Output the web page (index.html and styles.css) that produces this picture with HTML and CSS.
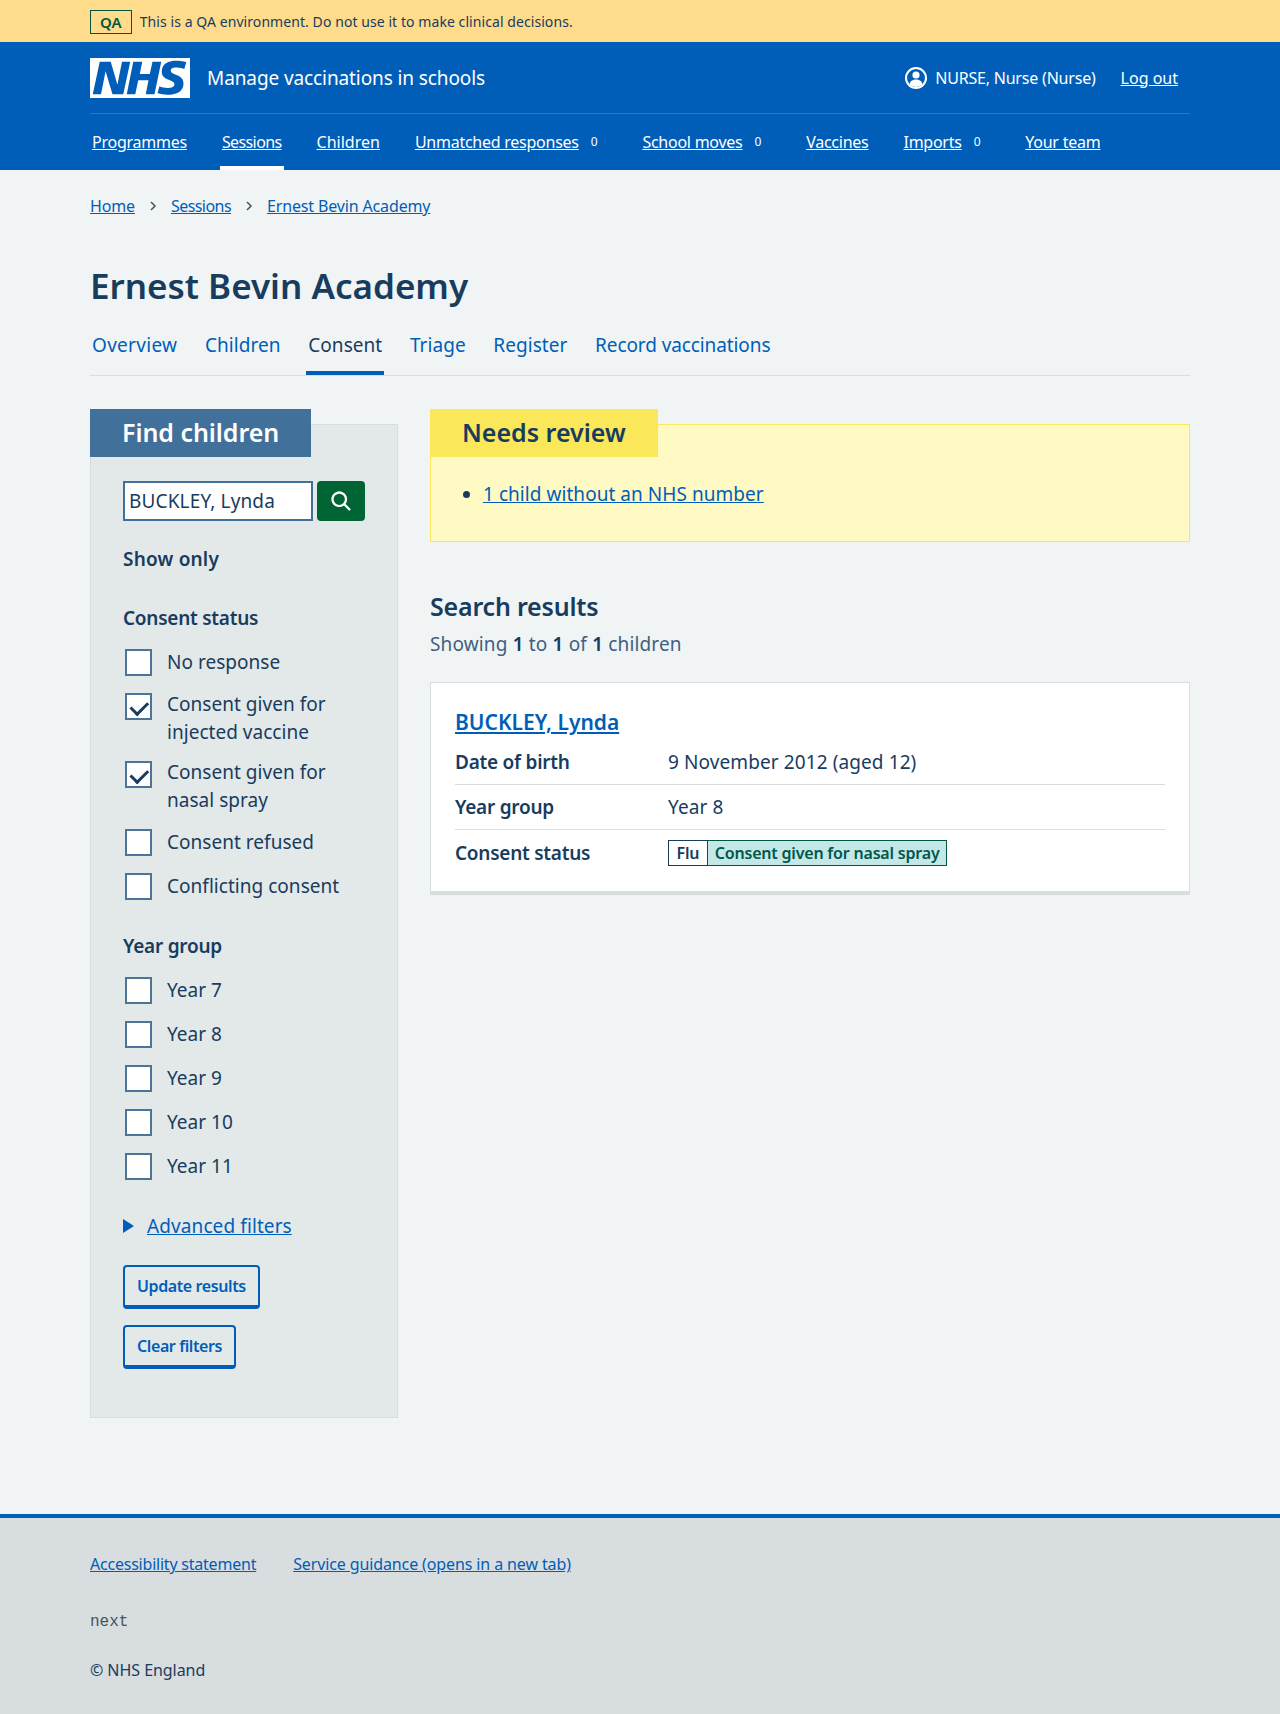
FILE: index.html
```html
<!DOCTYPE html>
<html lang="en">
<head>
<meta charset="utf-8">
<title>Ernest Bevin Academy</title>
<link rel="stylesheet" href="styles.css">
</head>
<body>
<div class="env-banner">
  <div class="wrap env-inner"><strong class="env-tag">QA</strong><span>This is a QA environment. Do not use it to make clinical decisions.</span></div>
</div>
<header class="header">
  <div class="wrap">
    <div class="header-top">
      <svg class="logo" viewBox="0 0 40 16" aria-label="NHS"><path fill="#fff" d="M0 0h40v16H0z"/><path fill="#005eb8" d="M3.9 1.5h4.4l2.6 9h.1l1.8-9h3.3l-2.8 13H9l-2.7-9h-.1l-1.8 9H1.1M17.3 1.5h3.6l-1 4.9h4L25 1.5h3.5l-2.7 13h-3.5l1.1-5.6h-4.1l-1.2 5.6h-3.4M37.7 4.4c-.7-.3-1.6-.6-2.9-.6-1.4 0-2.5.2-2.5 1.3 0 1.8 5.1 1.2 5.1 5.1 0 3.6-3.3 4.5-6.4 4.5-1.3 0-2.9-.3-4-.7l.8-2.7c.7.4 2.1.7 3.2.7s2.8-.2 2.8-1.5c0-2.1-5.1-1.3-5.1-5 0-3.4 2.9-4.4 5.8-4.4 1.6 0 3.1.2 4 .6"/></svg>
      <span class="service">Manage vaccinations in schools</span>
      <div class="account">
        <svg class="user-icon" viewBox="0 0 24 24"><circle cx="12" cy="12" r="10" fill="none" stroke="#fff" stroke-width="2"/><circle cx="12" cy="9" r="3.6" fill="#fff"/><path fill="#fff" d="M5.6 18.6c.5-3.6 3-5 6.4-5s5.900 1.400 6.400 5a9.500 9.500 0 0 1-12.800 0z"/></svg>
        <span>NURSE, Nurse (Nurse)</span>
        <a href="#" class="logout">Log out</a>
      </div>
    </div>
    <nav class="nav">
      <a href="#">Programmes</a>
      <a href="#" class="current">Sessions</a>
      <a href="#" class="loose">Children</a>
      <a href="#">Unmatched responses</a><span class="count">0</span>
      <a href="#">School moves</a><span class="count">0</span>
      <a href="#">Vaccines</a>
      <a href="#">Imports</a><span class="count">0</span>
      <a href="#">Your team</a>
    </nav>
  </div>
</header>
<main class="wrap">
  <ol class="crumbs">
    <li><a href="#">Home</a></li>
    <li class="sep"><svg viewBox="0 0 8 12"><path d="M2 2l4 4-4 4" fill="none" stroke="#425563" stroke-width="1.500"/></svg></li>
    <li class="tight"><a href="#">Sessions</a></li>
    <li class="sep"><svg viewBox="0 0 8 12"><path d="M2 2l4 4-4 4" fill="none" stroke="#425563" stroke-width="1.500"/></svg></li>
    <li><a href="#">Ernest Bevin Academy</a></li>
  </ol>
  <h1 class="title">Ernest Bevin Academy</h1>
  <nav class="tabs">
    <a href="#" class="wide">Overview</a>
    <a href="#">Children</a>
    <a href="#" class="current">Consent</a>
    <a href="#">Triage</a>
    <a href="#">Register</a>
    <a href="#" class="narrow">Record vaccinations</a>
  </nav>
  <div class="columns">
    <aside class="panel filter">
      <h2 class="panel-head blue">Find children</h2>
      <div class="search">
        <input class="search-input" type="text" value="BUCKLEY, Lynda">
        <button class="search-btn" type="button"><svg viewBox="0 0 24 24"><path fill="#fff" d="M19.710 18.290l-4.110-4.100a7 7 0 1 0-1.410 1.410l4.100 4.110a1 1 0 0 0 1.420 0 1 1 0 0 0 0-1.420zM5 10a5 5 0 1 1 5 5 5 5 0 0 1-5-5z"/></svg></button>
      </div>
      <p class="show-only">Show only</p>
      <h3 class="group-title">Consent status</h3>
      <label class="check"><input type="checkbox"><span>No response</span></label>
      <label class="check tall"><input type="checkbox" checked><span>Consent given for injected vaccine</span></label>
      <label class="check tall"><input type="checkbox" checked><span>Consent given for nasal spray</span></label>
      <label class="check"><input type="checkbox"><span>Consent refused</span></label>
      <label class="check"><input type="checkbox"><span>Conflicting consent</span></label>
      <h3 class="group-title second">Year group</h3>
      <label class="check"><input type="checkbox"><span>Year 7</span></label>
      <label class="check"><input type="checkbox"><span>Year 8</span></label>
      <label class="check"><input type="checkbox"><span>Year 9</span></label>
      <label class="check"><input type="checkbox"><span>Year 10</span></label>
      <label class="check"><input type="checkbox"><span>Year 11</span></label>
      <div class="advanced"><i class="triangle"></i><a href="#">Advanced filters</a></div>
      <button class="btn" type="button">Update results</button>
      <button class="btn" type="button">Clear filters</button>
    </aside>
    <section class="results">
      <div class="panel review">
        <h2 class="panel-head yellow">Needs review</h2>
        <ul class="review-list"><li><a href="#">1 child without an NHS number</a></li></ul>
      </div>
      <h2 class="results-title">Search results</h2>
      <p class="showing">Showing <b>1</b> to <b>1</b> of <b>1</b> children</p>
      <article class="card">
        <h3 class="card-title"><a href="#">BUCKLEY, Lynda</a></h3>
        <dl class="summary">
          <div class="row"><dt>Date of birth</dt><dd>9 November 2012 (aged 12)</dd></div>
          <div class="row"><dt>Year group</dt><dd>Year 8</dd></div>
          <div class="row"><dt>Consent status</dt><dd><span class="tags"><b class="tag-flu">Flu</b><b class="tag-status">Consent given for nasal spray</b></span></dd></div>
        </dl>
      </article>
    </section>
  </div>
</main>
<footer class="footer">
  <div class="wrap">
    <div class="foot-links"><a href="#">Accessibility statement</a><a href="#" class="loose">Service guidance (opens in a new tab)</a></div>
    <code class="version">next</code>
    <p class="copy">© NHS England</p>
  </div>
</footer>
</body>
</html>
```
FILE: styles.css
```css
* { box-sizing: border-box; }
html, body { margin: 0; padding: 0; }
body {
  background: #f0f4f5;
  color: #183c5e;
  font-family: "Noto Sans", "Open Sans", sans-serif;
  font-size: 19px;
  line-height: 28px;
  height: 1714px;
  display: flex;
  flex-direction: column;
}
a { color: #005eb8; }
h1, h2, h3, p, ul, ol, dl, dd { margin: 0; padding: 0; }
.wrap { width: 1100px; margin: 0 auto; }

.env-banner { background: #ffdb8c; height: 42px; }
.env-inner { display: flex; align-items: center; gap: 8px; height: 42px; font-size: 14px; letter-spacing: 0.07px; padding-top: 1px; }
.env-tag { border: 1px solid #00573f; color: #00573f; font-size: 15px; line-height: 22px; padding: 0 9px; font-weight: 600; }

.header { background: #005eb8; color: #fff; height: 128px; }
.header a { color: #fff; }
.header-top { display: flex; align-items: center; height: 72px; border-bottom: 1px solid #3a75b0; }
.logo { width: 100px; height: 40px; }
.service { margin-left: 17px; font-size: 19px; letter-spacing: -0.1px; }
.account { margin-left: auto; display: flex; align-items: center; font-size: 16px; padding-right: 12px; }
.account span { letter-spacing: -0.2px; }
.user-icon { width: 24px; height: 24px; margin-right: 7px; }
.logout { margin-left: 25px; }
.nav { display: flex; align-items: stretch; height: 56px; font-size: 16px; padding-left: 2px; letter-spacing: -0.25px; }
.nav a { display: flex; align-items: center; margin-right: 35px; position: relative; height: 56px; }
.nav a.current { letter-spacing: -0.6px; }
.nav a.loose { letter-spacing: 0; }
.nav a.current::after { content: ""; position: absolute; left: -2px; right: -2px; bottom: 0; height: 4px; background: #fff; }
.nav .count { display: flex; align-items: center; margin: 0 45px 0 -23px; font-size: 12px; }

.crumbs { list-style: none; display: flex; align-items: center; margin-top: 22px; font-size: 16px; line-height: 28px; letter-spacing: -0.15px; }
.crumbs .sep { display: flex; width: 36px; justify-content: center; }
.crumbs .tight { letter-spacing: -0.55px; }
.crumbs svg { width: 8px; height: 12px; }

.title { font-size: 35px; line-height: 44px; font-weight: 600; margin-top: 44px; }
.tabs { display: flex; margin-top: 22px; height: 46px; border-bottom: 1px solid #d8dde0; font-size: 19px; padding-left: 2px; letter-spacing: 0.05px; }
.tabs a { text-decoration: none; margin-right: 27.700px; position: relative; line-height: 30px; }
.tabs a.wide { letter-spacing: 0.3px; }
.tabs a.narrow { letter-spacing: -0.1px; }
.tabs a.current { color: #183c5e; }
.tabs a.current::after { content: ""; position: absolute; left: -2px; right: -2px; bottom: 0; height: 4px; background: #005eb8; }

.columns { display: flex; gap: 32px; margin-top: 48px; align-items: flex-start; }
.panel { position: relative; }
.panel-head { position: absolute; top: -16px; left: -1px; height: 48px; padding: 0 32px; font-size: 25px; line-height: 46px; font-weight: 600; }
.panel-head.blue { background: #41709a; color: #fff; letter-spacing: -0.05px; }
.panel-head.yellow { background: #fae75a; }

.filter { width: 308px; height: 994px; background: #e3e8e9; border: 1px solid #d8dde0; padding: 56px 32px 0; }
.search { display: flex; gap: 4px; }
.search-input { width: 190px; height: 40px; border: 2px solid #41709a; background: #fff; color: #183c5e; font: inherit; letter-spacing: 0.15px; padding: 0 4px; border-radius: 0; }
.search-btn { width: 48px; height: 40px; border: 0; border-radius: 4px; background: #006435; padding: 0; display: flex; align-items: center; justify-content: center; }
.search-btn svg { width: 27px; height: 27px; }
.show-only { font-weight: 600; margin-top: 24px; letter-spacing: 0.2px; }
.group-title { font-size: 19px; font-weight: 600; line-height: 28px; margin-top: 31px; margin-bottom: 16px; letter-spacing: -0.25px; }
.group-title.second { margin-top: 32px; }
.check { display: flex; align-items: center; min-height: 28px; margin-bottom: 16px; gap: 16px; padding-left: 2px; line-height: 28px; letter-spacing: 0.03px; }
.check.tall { align-items: flex-start; margin-top: -2px; margin-bottom: 14px; }
.check input { appearance: none; width: 27px; height: 27px; margin: 0; flex: none; background: #fff; border: 2px solid #4c7496; position: relative; }
.check span { margin-left: -1px; }
.check.tall input { margin-top: 3px; }
.check input:checked::after { content: ""; position: absolute; left: 7px; top: 2.500px; width: 8px; height: 13.500px; border: solid #183c5e; border-width: 0 3.500px 3.500px 0; transform: rotate(45deg); }
.advanced { display: flex; align-items: center; gap: 14px; margin-top: 32px; letter-spacing: 0.1px; }
.advanced a { margin-left: -1px; }
.triangle { width: 0; height: 0; border-left: 11px solid #005eb8; border-top: 7px solid transparent; border-bottom: 7px solid transparent; }
.btn { display: block; font: inherit; font-size: 16px; font-weight: 600; color: #005eb8; background: transparent; border: 2px solid #005eb8; border-bottom-width: 4px; border-radius: 4px; height: 44px; padding: 0 12px; margin-bottom: 16px; letter-spacing: -0.4px; }
.advanced + .btn { margin-top: 25px; }

.results { flex: 1; }
.review { height: 118px; background: #fff9c4; border: 1px solid #fae75a; }
.review-list { position: absolute; top: 55px; left: 52px; letter-spacing: 0.05px; }
.results-title { font-size: 25px; line-height: 32px; font-weight: 600; margin-top: 48px; letter-spacing: -0.2px; }
.showing { color: #41607e; margin-top: 8px; letter-spacing: 0.15px; }
.showing b { font-weight: 600; color: #183c5e; }
.card { background: #fff; border: 1px solid #d8dde0; border-bottom-width: 4px; margin-top: 24px; height: 213px; padding: 23px 24px 0; }
.card-title { font-size: 21px; line-height: 32px; font-weight: 600; margin-bottom: 7px; }
.row { display: flex; height: 45px; border-bottom: 1px solid #d8dde0; align-items: center; }
.summary .row:first-child { height: 40px; align-items: flex-start; padding-top: 3px; }
.row:last-child { border-bottom: 0; }
dt { width: 213px; font-weight: 600; letter-spacing: -0.25px; }
dd { letter-spacing: 0.1px; }
.tags { display: flex; font-size: 16px; line-height: 24px; letter-spacing: -0.2px; }
.tag-flu, .tag-status { font-weight: 600; border: 1px solid #00573f; height: 26px; }
.tag-flu { border-color: #183c5e; padding: 0 7.500px; background: #fff; border-right: 0; }
.tag-status { background: #c4e8e8; color: #00574a; padding: 0 7px; }

.footer { margin-top: auto; height: 200px; background: #d8dde0; border-top: 4px solid #005eb8; font-size: 16px; }
.foot-links { display: flex; gap: 37px; margin-top: 32px; letter-spacing: -0.22px; }
.foot-links .loose { letter-spacing: -0.12px; }
.version { display: block; font-family: "Liberation Mono", monospace; font-size: 16px; color: #425563; margin-top: 30px; }
.copy { margin-top: 20px; letter-spacing: -0.05px; }
```
